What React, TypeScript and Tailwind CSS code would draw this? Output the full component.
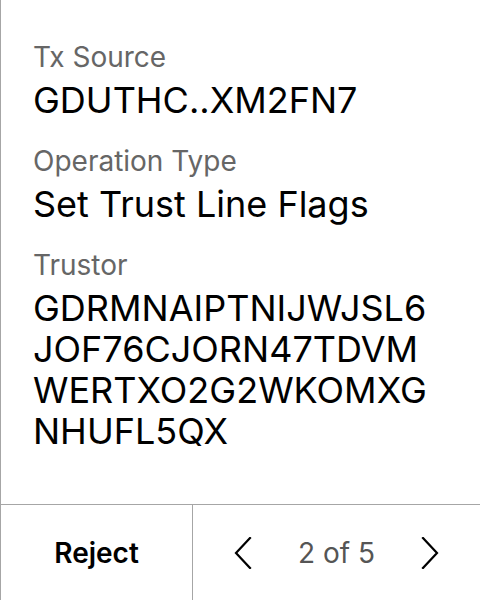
const FIELDS = [
  { label: "Tx Source", value: "GDUTHC..XM2FN7" },
  { label: "Operation Type", value: "Set Trust Line Flags" },
  {
    label: "Trustor",
    value: "GDRMNAIPTNIJWJSL6JOF76CJORN47TDVMWERTXO2G2WKOMXGNHUFL5QX",
  },
];

function Chevron({ dir }: { dir: "left" | "right" }) {
  return (
    <svg width="18" height="32" viewBox="0 0 18 32" fill="none">
      <polyline
        points={dir === "left" ? "16,1 2,16 16,31" : "2,1 16,16 2,31"}
        stroke="black"
        strokeWidth="2.2"
        strokeLinecap="square"
      />
    </svg>
  );
}

export default function App() {
  return (
    <div
      className="w-[480px] h-[600px] flex flex-col bg-white border-l border-[#a6a6a6] overflow-hidden"
      style={{ fontFamily: "Inter, 'Noto Sans', sans-serif" }}
    >
      {/* Fields */}
      <div className="flex-1 flex flex-col gap-[20px] pl-[32px] pt-[37px]">
        {FIELDS.map((f) => (
          <div key={f.label} className="flex flex-col">
            <span className="text-[28px] leading-[40px] text-[#666666]">{f.label}</span>
            <span className="w-[400px] mt-[3px] text-[36px] leading-[41px] text-black break-all">
              {f.value}
            </span>
          </div>
        ))}
      </div>

      {/* Bottom bar */}
      <div className="h-[96px] flex border-t border-[#a6a6a6] shrink-0">
        <button className="w-[192px] flex items-center justify-center border-r border-[#a6a6a6] text-[28px] font-semibold text-black">
          Reject
        </button>
        <div className="flex-1 flex items-center justify-between px-[41px]">
          <Chevron dir="left" />
          <span className="text-[28px] text-[#555555]">2 of 5</span>
          <Chevron dir="right" />
        </div>
      </div>
    </div>
  );
}
